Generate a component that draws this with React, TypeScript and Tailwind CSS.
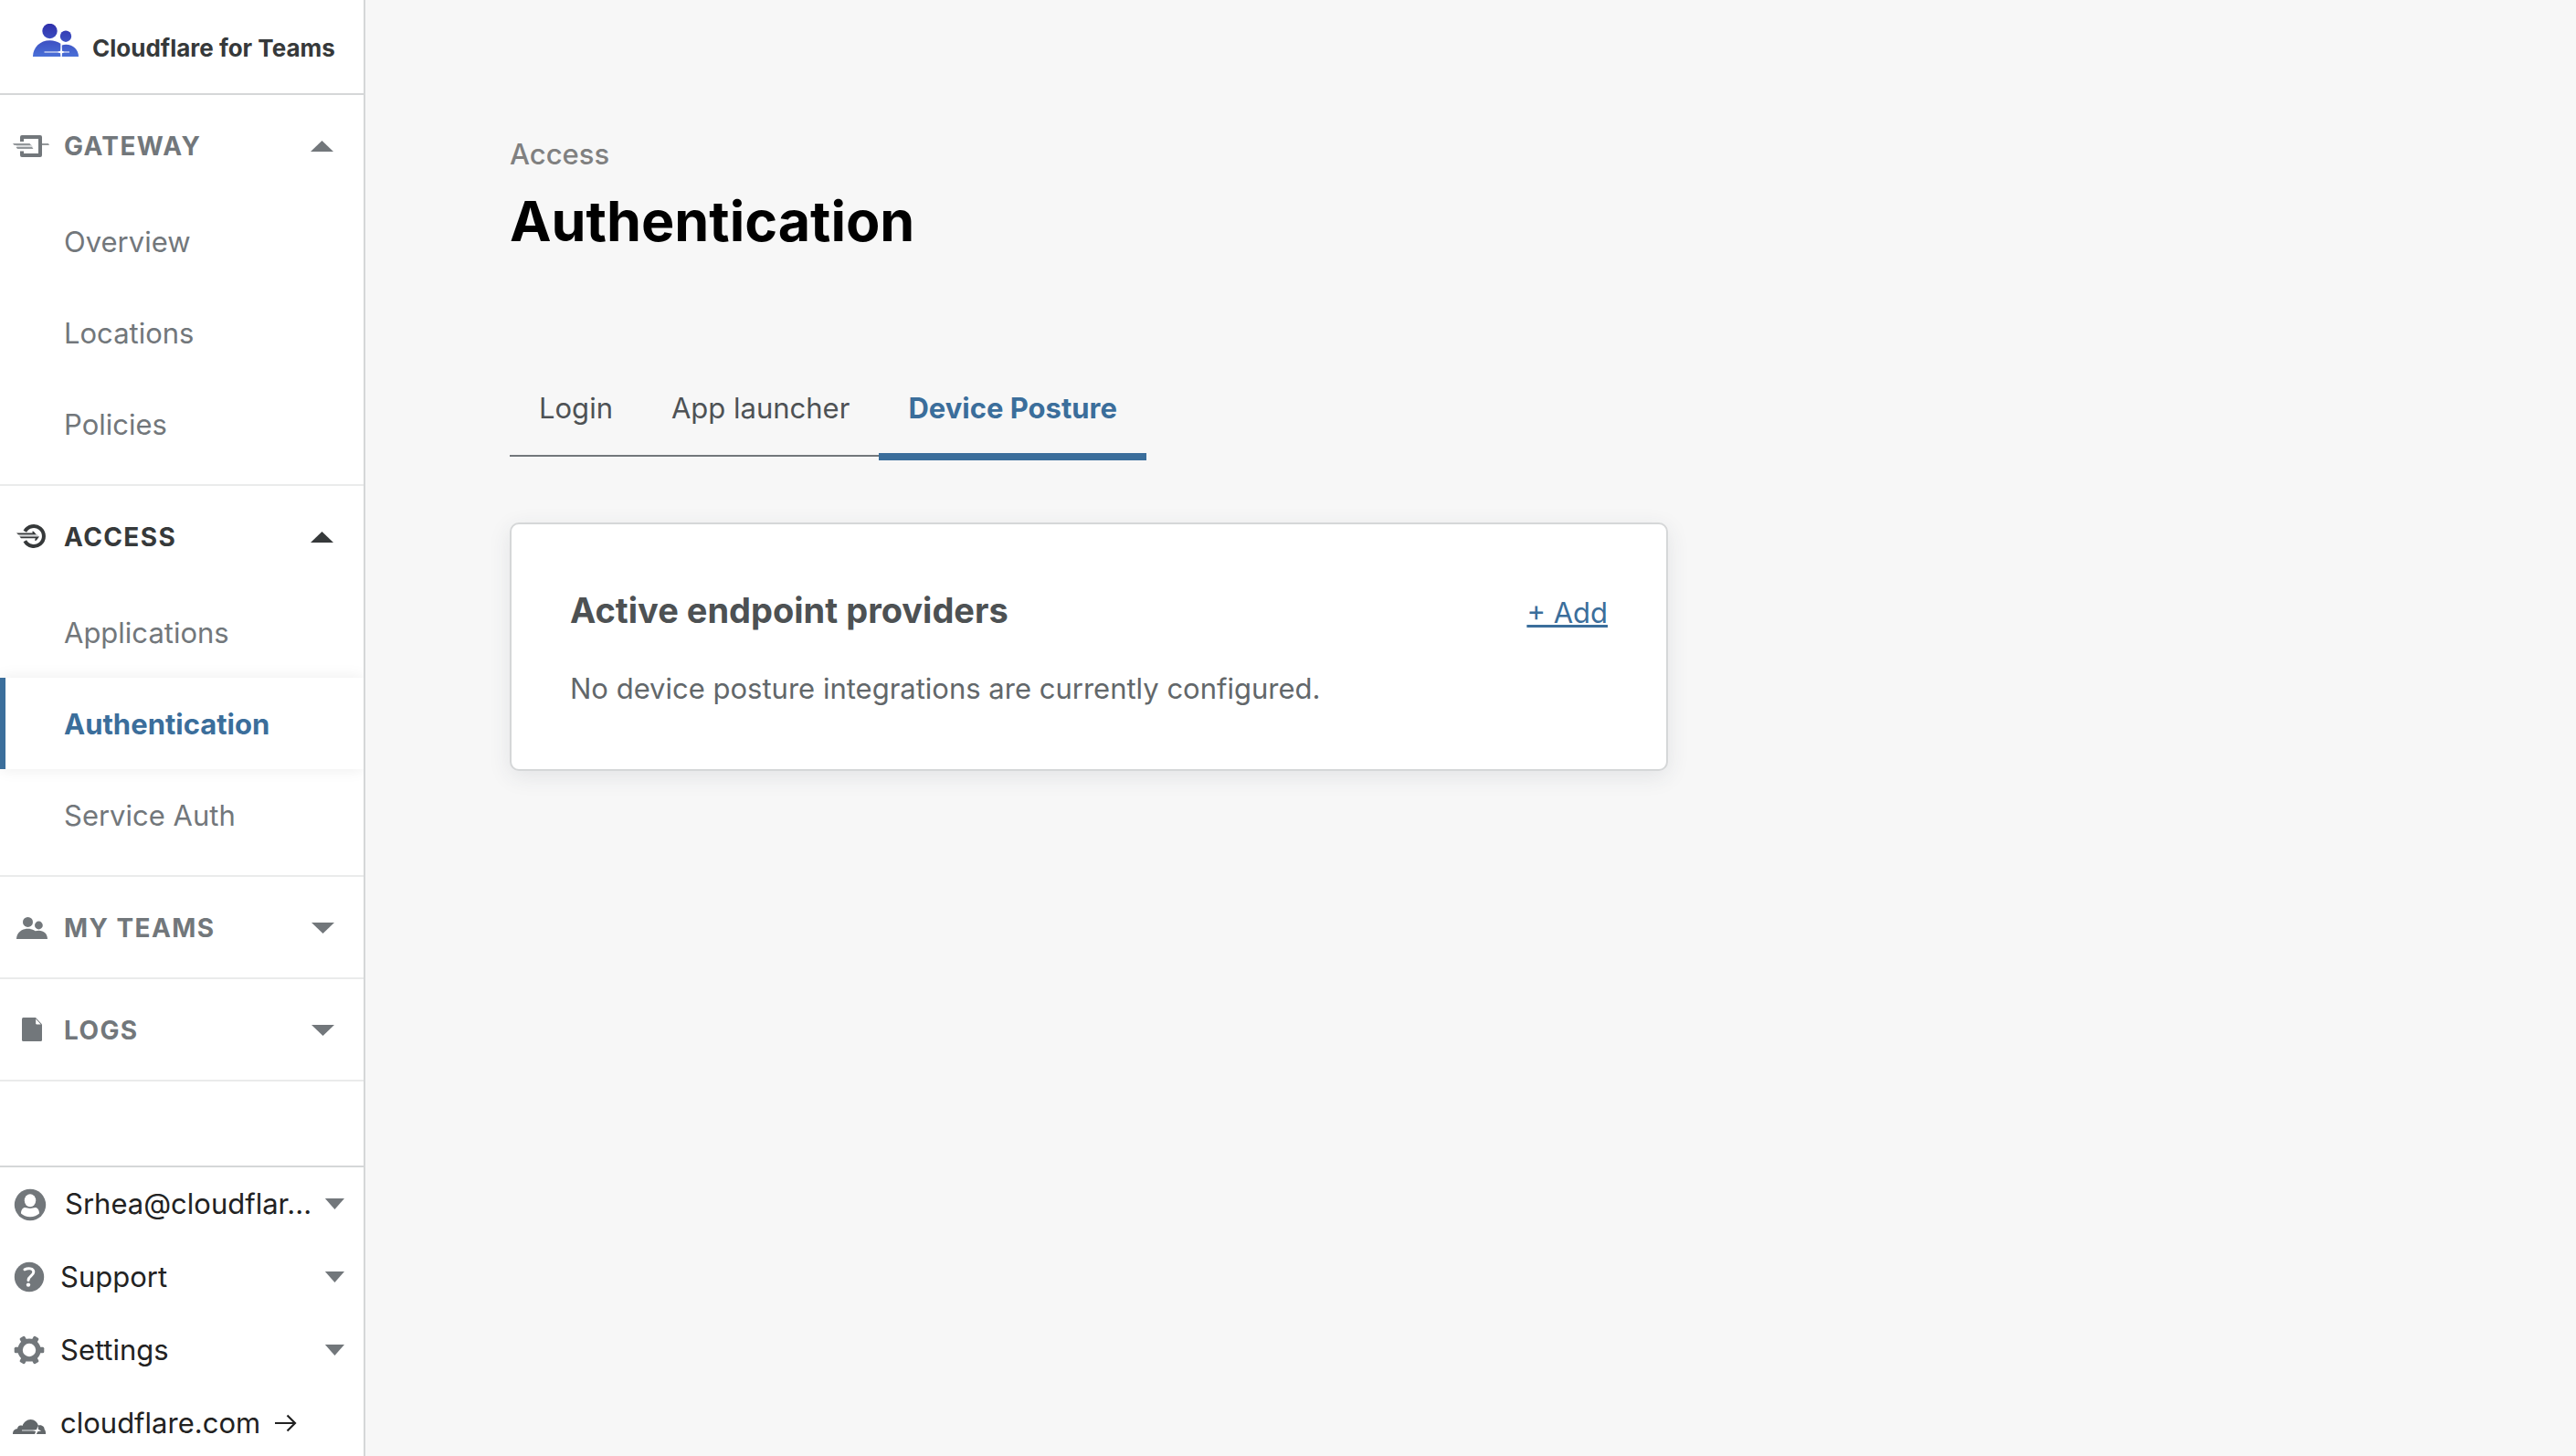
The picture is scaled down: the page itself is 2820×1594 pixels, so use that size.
import { useState, type ReactNode } from 'react';
import clsx from 'clsx';

function LogoIcon() {
  return (
    <svg width="50" height="36" viewBox="0 0 50 36" aria-hidden="true" className="shrink-0">
      <defs>
        <linearGradient id="logo-fill" x1="0" y1="0" x2="0" y2="36" gradientUnits="userSpaceOnUse">
          <stop offset="0" stopColor="#2f2fab" />
          <stop offset="1" stopColor="#4a70d8" />
        </linearGradient>
      </defs>
      <g fill="url(#logo-fill)">
        <circle cx="18.5" cy="8" r="8.2" />
        <circle cx="36" cy="13.7" r="6.2" />
        <path d="M0 36C0 26 8 18.3 18.5 18.3c4.600 0 8.500 1.200 11.800 3.500V36Z" />
        <path d="M31.800 23.400c1.400-.4 2.800-.6 4.400-.6C44 22.800 50 28.500 50 36H31.800Z" />
      </g>
      <path d="M12.500 30.400H27l3.200-.6.9-3.300.9 3.300 2.500.6H40v1.200h-5.500l-2.500.6-.9 3.300-.9-3.300-3.200-.6H12.500Z" fill="#fff" />
    </svg>
  );
}

function GatewayIcon() {
  return (
    <>
      <path d="M24 15v-5h20v20H24v-4.500" fill="none" stroke="currentColor" strokeWidth="4" strokeLinejoin="round" />
      <path d="M46 17.200h7l1 1.600h-8Z" fill="currentColor" />
      <path d="M17 18.500h17.500l1.500 3H19Z" fill="#d9dbdd" />
      <path d="M14 17.200h18.500l1.500 1.600H15.500Z" fill="currentColor" />
      <path d="M17.500 21.300H35l1.500 1.500H19Z" fill="currentColor" />
    </>
  );
}

function AccessIcon() {
  return (
    <>
      <path d="M27.300 13.700a11 11 0 1 1 0 10.600" fill="none" stroke="currentColor" strokeWidth="4" />
      <path d="M20 16.800h20.500l2.500 3H22Z" fill="#d3d5d6" />
      <path d="M18 15.600h17.800l-.6-1.900h1.600l3 3.500H20Z" fill="currentColor" />
      <path d="M21.500 19.600H43l-3.300 4.200H38l.8-2.600H23Z" fill="currentColor" />
    </>
  );
}

function TeamsIcon() {
  return (
    <g fill="currentColor">
      <circle cx="30.500" cy="13.400" r="5.500" />
      <circle cx="42.400" cy="17" r="4.400" />
      <path d="M18 32c0-6.500 5.500-11.300 12.500-11.300 3.300 0 6 .9 8.200 2.600 1.200-.3 2.500-.5 3.700-.5C48 22.800 52 26.500 52 32Z" />
    </g>
  );
}

function FileIcon() {
  return (
    <>
      <path d="M25.500 6H39l7 7.500v17a1.500 1.500 0 0 1-1.500 1.500h-19a1.500 1.500 0 0 1-1.500-1.500v-23A1.500 1.500 0 0 1 25.500 6Z" fill="currentColor" />
      <path d="M39.200 7.500v4.800q0 1.200 1.200 1.200h4.300Z" fill="#fff" />
    </>
  );
}

function UserIcon() {
  return (
    <>
      <circle cx="33" cy="21" r="17.200" fill="currentColor" />
      <ellipse cx="33" cy="16.300" rx="6.200" ry="7" fill="#fff" />
      <path d="M23 30.500c0-4 2-6.500 4.500-6.500 1.800 0 3 1 5.500 1s3.700-1 5.500-1c2.500 0 4.500 2.500 4.500 6.500-2.500 2.400-6 3.700-10 3.700s-7.500-1.300-10-3.700Z" fill="#fff" />
    </>
  );
}

function HelpIcon() {
  return (
    <>
      <circle cx="32" cy="20" r="16.200" fill="currentColor" />
      <path d="M27 11.800c3.500-1.700 9.800-1.700 9.800 2.700 0 4.200-5.800 4.500-5.800 9" fill="none" stroke="#fff" strokeWidth="3" strokeLinecap="round" />
      <circle cx="31" cy="28.600" r="2.200" fill="#fff" />
    </>
  );
}

function GearIcon() {
  return (
    <>
      {[0, 60, 120].map((angle) => (
        <rect key={angle} x="15.700" y="16.800" width="32.600" height="6.400" rx="1.500" fill="currentColor" transform={`rotate(${angle} 32 20)`} />
      ))}
      <circle cx="32" cy="20" r="12.600" fill="currentColor" />
      <circle cx="32" cy="20" r="7.200" fill="#fff" />
    </>
  );
}

function CloudIcon() {
  return (
    <>
      <path
        d="M14 32c0-3.600 2.200-5.800 5-5.700.1-2.800 3-4.600 5.500-3.200C26 19 29.500 16 33.500 16c4.300 0 7.500 3 8.300 6.500 4.700-1 7 2 6.900 4.600 1 .8 1.500 2.600 1.300 4.900Z"
        fill="#62676a"
      />
      <path d="M24 27.300h13.500v1.400H24Z" fill="#bfc2c4" />
      <path d="M41.500 23l-1.400 4-4 1 3 1.200-1 2.800h1.800l1.300-2.800 4-.8-3.200-1.400Z" fill="#fff" />
    </>
  );
}

function ArrowIcon() {
  return (
    <svg width="24" height="20" viewBox="0 0 24 20" fill="none" stroke="currentColor" strokeWidth="2.200" aria-hidden="true">
      <path d="M0 10h21.500M13.500 1.500 22 10l-8.500 8.500" />
    </svg>
  );
}

function Caret({ up = false, small = false }: { up?: boolean; small?: boolean }) {
  return (
    <svg width={small ? 22 : 26} height="12" viewBox="0 0 26 12" preserveAspectRatio="none" fill="currentColor" aria-hidden="true" className="ml-auto shrink-0">
      <path d={up ? 'M0 12 12.500 0 25 12Z' : 'M1 0h25L13.500 12Z'} />
    </svg>
  );
}

type Section = { name: string; icon: ReactNode; items: string[] };

const sections: Section[] = [
  { name: 'GATEWAY', icon: <GatewayIcon />, items: ['Overview', 'Locations', 'Policies'] },
  { name: 'ACCESS', icon: <AccessIcon />, items: ['Applications', 'Authentication', 'Service Auth'] },
  { name: 'MY TEAMS', icon: <TeamsIcon />, items: ['Users', 'Devices'] },
  { name: 'LOGS', icon: <FileIcon />, items: ['Activity'] },
];

const current = { section: 'ACCESS', item: 'Authentication' };

function NavSection({ section }: { section: Section }) {
  const [open, setOpen] = useState(section.name === 'GATEWAY' || section.name === 'ACCESS');
  return (
    <section className="overflow-hidden border-b-2 border-[#eaebeb]">
      <button
        type="button"
        aria-expanded={open}
        onClick={() => setOpen(!open)}
        className={clsx(
          'flex h-[110px] w-full items-center pt-0.5 pr-8 text-[28px] leading-10 font-bold tracking-wider',
          section.name === current.section ? 'text-[#36393a]' : 'text-[#72777b]',
        )}
      >
        <svg width="70" height="40" viewBox="0 0 70 40" aria-hidden="true" className="shrink-0">
          {section.icon}
        </svg>
        {section.name}
        <Caret up={open} />
      </button>
      {open && (
        <ul className="pb-4">
          {section.items.map((item) => (
            <li key={item}>
              <a
                href="#"
                aria-current={item === current.item ? 'page' : undefined}
                className={clsx(
                  'flex h-[100px] items-center pt-0.5 text-[31px]',
                  item === current.item
                    ? 'border-l-[6px] border-[#3b6e9b] pl-16 font-bold text-[#3b6e9b] shadow-[0_0_16px_rgba(0,0,0,0.08)]'
                    : 'pl-[70px] text-[#72777b]',
                )}
              >
                {item}
              </a>
            </li>
          ))}
        </ul>
      )}
    </section>
  );
}

const account: { label: string; icon: ReactNode }[] = [
  { label: 'Srhea@cloudflar...', icon: <UserIcon /> },
  { label: 'Support', icon: <HelpIcon /> },
  { label: 'Settings', icon: <GearIcon /> },
];

function Sidebar() {
  return (
    <aside className="flex h-screen w-[400px] shrink-0 flex-col border-r-2 border-[#d5d7d8] bg-white">
      <header className="flex h-[104px] shrink-0 items-baseline gap-[15px] border-b-2 border-[#d5d7d8] pt-[26px] pl-9">
        <LogoIcon />
        <span className="text-[26px] leading-9 font-bold whitespace-nowrap text-[#36393a]">Cloudflare for Teams</span>
      </header>
      <nav aria-label="Main" className="min-h-0 flex-1 overflow-hidden">
        {sections.map((section) => (
          <NavSection key={section.name} section={section} />
        ))}
      </nav>
      <footer className="shrink-0 border-t-2 border-[#d5d7d8] text-[31px] leading-10 text-[#222222]">
        {account.map(({ label, icon }, i) => (
          <button key={label} type="button" className="flex h-20 w-full items-center pr-[21px]">
            <svg width={i === 0 ? 71 : 66} height="40" viewBox={i === 0 ? '0 0 71 40' : '0 0 66 40'} aria-hidden="true" className="shrink-0 text-[#72777b]">
              {icon}
            </svg>
            {label}
            <span className="ml-auto text-[#72777b]">
              <Caret small />
            </span>
          </button>
        ))}
        <a href="#" className="flex h-19 items-center pt-1">
          <svg width="66" height="40" viewBox="0 0 66 40" aria-hidden="true" className="shrink-0">
            <CloudIcon />
          </svg>
          <span className="mr-4">cloudflare.com</span>
          <ArrowIcon />
        </a>
      </footer>
    </aside>
  );
}

const tabs = ['Login', 'App launcher', 'Device Posture'];

function Tabs() {
  const [selected, setSelected] = useState('Device Posture');
  return (
    <div role="tablist" className="mt-[116px] flex h-[109px] items-start">
      {tabs.map((tab) => (
        <button
          key={tab}
          type="button"
          role="tab"
          aria-selected={tab === selected}
          onClick={() => setSelected(tab)}
          className={clsx(
            'px-8 pt-7 text-[31px] leading-[48px]',
            tab === selected
              ? 'border-b-8 border-[#3b6e9b] pb-[25px] font-bold text-[#3b6e9b]'
              : 'border-b-2 border-[#72777b] pb-[27px] text-[#4e5255]',
          )}
        >
          {tab}
        </button>
      ))}
    </div>
  );
}

export default function App() {
  return (
    <div className="flex min-h-screen bg-[#f7f7f7] font-['Inter',sans-serif]">
      <Sidebar />
      <main className="min-w-0 flex-1 px-[158px] pt-[149px]">
        <p className="text-[31px] leading-10 font-medium text-[#808080]">Access</p>
        <h1 className="mt-4 text-[61px] leading-[74px] font-bold text-black">Authentication</h1>
        <Tabs />
        <section className="mt-[68px] max-w-[1268px] rounded-[10px] border-2 border-[#d5d7d8] bg-white p-16 shadow-[0_6px_24px_rgba(50,60,80,0.10)]">
          <div className="flex items-baseline justify-between">
            <h2 className="text-[38px] leading-[60px] font-bold text-[#4d5153]">Active endpoint providers</h2>
            <a href="#" className="text-[31px] leading-[48px] text-[#3b6e9b] underline">
              + Add
            </a>
          </div>
          <p className="mt-8 text-[31px] leading-[48px] text-[#62676a]">No device posture integrations are currently configured.</p>
        </section>
      </main>
    </div>
  );
}
